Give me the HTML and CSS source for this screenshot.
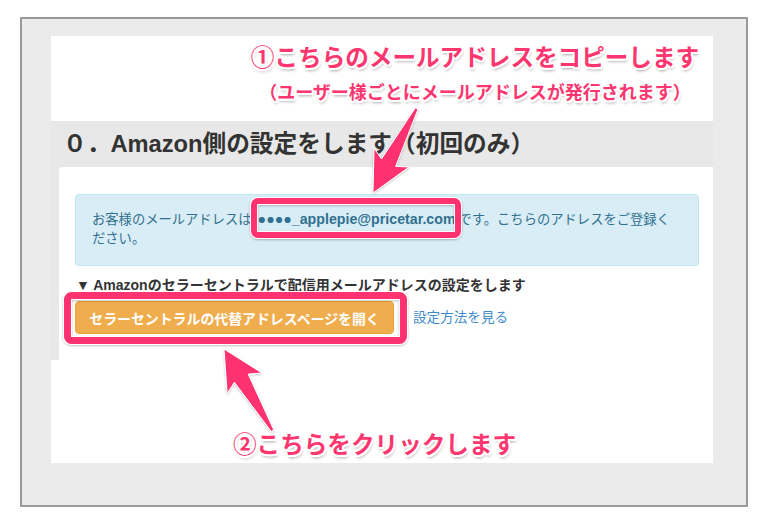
FILE: index.html
```html
<!DOCTYPE html>
<html lang="ja">
<head>
<meta charset="utf-8">
<link rel="stylesheet" href="styles.css">
</head>
<body>
<div class="frame">
  <div class="page">
    <div class="annot-top">
      <div class="note note-lg">①こちらのメールアドレスをコピーします</div>
      <div class="note note-sm">（ユーザー様ごとにメールアドレスが発行されます）</div>
    </div>
    <div class="section">
      <h2 class="section-title">０．Amazon側の設定をします（初回のみ）</h2>
      <div class="card">
        <div class="alert">お客様のメールアドレスは<strong class="email">●●●●_applepie@pricetar.com</strong>です。こちらのアドレスをご登録ください。</div>
        <p class="step">▼ Amazonのセラーセントラルで配信用メールアドレスの設定をします</p>
        <div class="actions">
          <button class="btn">セラーセントラルの代替アドレスページを開く</button>
          <a class="link">設定方法を見る</a>
        </div>
      </div>
    </div>
    <div class="annot-bottom">
      <div class="note note-lg">②こちらをクリックします</div>
    </div>
  </div>
</div>
<svg class="overlay" width="768" height="524" viewBox="0 0 768 524">
  <defs>
    <filter id="sh" x="-20%" y="-20%" width="140%" height="140%">
      <feDropShadow dx="0" dy="1" stdDeviation="1" flood-color="#000" flood-opacity="0.25"/>
    </filter>
  </defs>
  <g filter="url(#sh)">
    <rect x="254" y="201" width="204" height="34" rx="4" fill="none" stroke="#fff" stroke-width="8"/>
    <rect x="254" y="201" width="204" height="34" rx="4" fill="none" stroke="#fe3370" stroke-width="6"/>
    <rect x="67.5" y="295.5" width="336" height="45" rx="4" fill="none" stroke="#fff" stroke-width="9"/>
    <rect x="67.5" y="295.5" width="336" height="45" rx="4" fill="none" stroke="#fe3370" stroke-width="7"/>
    <polygon points="373,193 409,167 395.7,166.4 418,109.2 415.4,107.8 381.5,159 374,148" fill="#fe3370" stroke="#fff" stroke-width="1" stroke-linejoin="round"/>
    <polygon points="224,349 262,373 248.2,374.1 273.8,430 271.2,431.5 234.4,382.3 227.2,393.6" fill="#fe3370" stroke="#fff" stroke-width="1" stroke-linejoin="round"/>
  </g>
</svg>
</body>
</html>
```
FILE: styles.css
```css
html, body {
  margin: 0;
  padding: 0;
  background: #ffffff;
}
body {
  position: relative;
  width: 768px;
  height: 524px;
  overflow: hidden;
  font-family: "Liberation Sans", "Noto Sans CJK JP", sans-serif;
}
.frame {
  box-sizing: border-box;
  margin: 17px 0 0 20px;
  width: 728px;
  height: 490px;
  border: 2px solid #9a9a9a;
  background: #ebebeb;
  padding: 17px 33px 42px 29px;
}
.page {
  width: 662px;
  height: 427px;
  background: #ffffff;
  display: flex;
  flex-direction: column;
}
.annot-top {
  height: 85px;
  box-sizing: border-box;
  padding: 5px 0 0 186px;
  display: flex;
  flex-direction: column;
  align-items: center;
}
.note {
  font-family: "Noto Sans CJK JP", sans-serif;
  font-weight: 700;
  color: #fd3670;
  white-space: nowrap;
  text-shadow:
    1px 0 0 #fff, -1px 0 0 #fff, 0 1px 0 #fff, 0 -1px 0 #fff,
    1.5px 1.5px 0 #fff, -1.5px 1.5px 0 #fff, 1.5px -1.5px 0 #fff, -1.5px -1.5px 0 #fff,
    2px 0 0 #fff, -2px 0 0 #fff, 0 2px 0 #fff, 0 -2px 0 #fff,
    1px 3px 3px rgba(0,0,0,0.35);
}
.note-lg {
  font-size: 23.6px;
  line-height: 30px;
}
.note-sm {
  font-size: 18px;
  line-height: 22px;
  margin-top: 9px;
}
.section {
  height: 239px;
  background: #e8e8e8;
  display: flex;
  flex-direction: column;
}
.section-title {
  margin: 0;
  height: 46px;
  line-height: 46px;
  padding-left: 12px;
  font-size: 23.7px;
  font-weight: 700;
  color: #333333;
  white-space: nowrap;
}
.card {
  flex: 1;
  margin-left: 8px;
  background: #ffffff;
  border-top-left-radius: 4px;
  padding: 27px 14px 0 16px;
}
.alert {
  padding: 15px 22px 17px 16px;
  border: 1px solid #bce8f1;
  border-radius: 4px;
  background: #d9edf7;
  color: #31708f;
  font-size: 13.3px;
  line-height: 19px;
}
.email {
  font-weight: 700;
  font-size: 14.2px;
  margin: 0 3px 0 6px;
}
.step {
  margin: 9px 0 0 1px;
  font-size: 14px;
  line-height: 20px;
  font-weight: 700;
  color: #333333;
  white-space: nowrap;
}
.actions {
  margin-top: 6px;
  display: flex;
  align-items: center;
  gap: 19px;
}
.btn {
  box-sizing: border-box;
  width: 319px;
  height: 33px;
  padding: 0;
  background: #f0ad4e;
  border: 1px solid #eea236;
  border-radius: 4px;
  color: #ffffff;
  font-family: "Liberation Sans", "Noto Sans CJK JP", sans-serif;
  font-size: 13.9px;
  font-weight: 700;
}
.link {
  color: #428bca;
  font-size: 13.6px;
  line-height: 20px;
}
.annot-bottom {
  flex: 1;
  padding: 68px 0 0 182px;
}
.overlay {
  position: absolute;
  left: 0;
  top: 0;
  pointer-events: none;
}
```
